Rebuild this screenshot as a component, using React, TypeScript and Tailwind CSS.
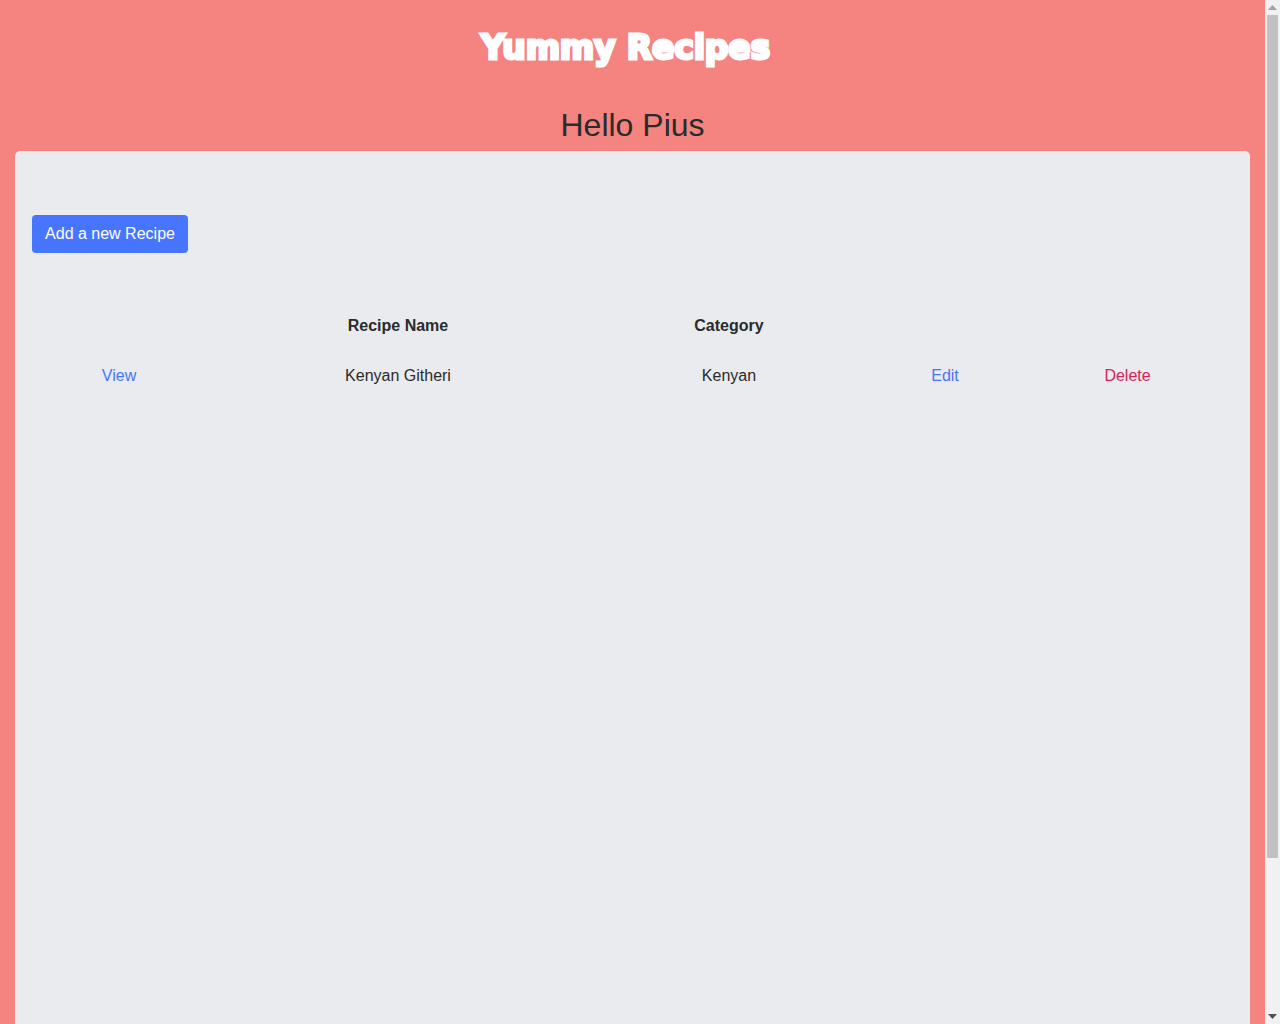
export default function App() {
  return (
    <div className="h-[1024px] flex bg-white font-['Liberation_Sans',Arial,sans-serif] text-[#292b2c] text-base">
      <main className="flex-1 min-w-0 bg-[#f58380] px-[15px] flex flex-col">
        <h1 className="pt-[27px] pr-[14px] text-center text-[33px] leading-[42px] font-bold text-white tracking-[-0.15px] font-['DejaVu_Sans',sans-serif] [-webkit-text-stroke:3px_white]">
          Yummy Recipes
        </h1>
        <h2 className="mt-[37px] text-center text-[32px] leading-[38px] font-normal">Hello Pius</h2>
        <div className="mt-[7px] flex-1 bg-[#e9ebee] rounded-t-[5px] px-[17px] pt-[64px]">
          <button className="h-[38px] w-[156px] rounded-[4px] bg-[#4775ff] text-white text-base">Add a new Recipe</button>
          <table className="mt-[48px] w-full table-fixed">
            <colgroup>
              <col className="w-[174px]" />
              <col className="w-[384px]" />
              <col className="w-[278px]" />
              <col className="w-[154px]" />
              <col className="w-[211px]" />
            </colgroup>
            <thead>
              <tr className="h-[50px]">
                <th></th>
                <th className="font-bold text-center">Recipe Name</th>
                <th className="font-bold text-center">Category</th>
                <th></th>
                <th></th>
              </tr>
            </thead>
            <tbody>
              <tr className="h-[50px] text-center">
                <td><a href="#" className="text-[#4775ff]">View</a></td>
                <td>Kenyan Githeri</td>
                <td>Kenyan</td>
                <td><a href="#" className="text-[#4775ff]">Edit</a></td>
                <td><a href="#" className="text-[#d4245a]">Delete</a></td>
              </tr>
            </tbody>
          </table>
        </div>
      </main>
      {/* scrollbar */}
      <aside className="w-[15px] shrink-0 bg-[#f1f1f1] flex flex-col items-center">
        <div className="h-[15px] flex items-center justify-center">
          <svg width="9" height="5" viewBox="0 0 9 5"><path d="M4.5 0L9 5H0z" fill="#a3a3a3" /></svg>
        </div>
        <div className="h-[843px] w-full px-[2px]">
          <div className="h-full bg-[#c1c1c1]"></div>
        </div>
        <div className="mt-auto h-[15px] flex items-center justify-center">
          <svg width="9" height="5" viewBox="0 0 9 5"><path d="M0 0H9L4.5 5z" fill="#505050" /></svg>
        </div>
      </aside>
    </div>
  )
}
